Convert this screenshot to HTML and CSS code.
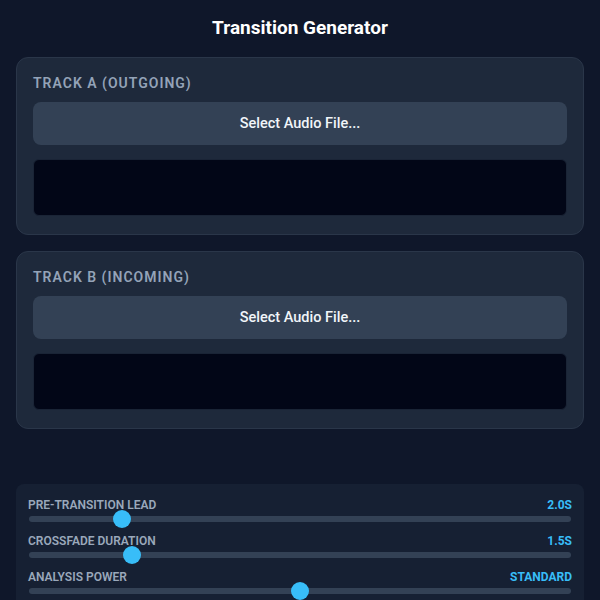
FILE: index.html
```html
<!DOCTYPE html>
<html>
<head>
<title>Transition Generator</title>
<link rel="stylesheet" href="styles.css">
</head>
<body>
<div class="app">
  <h1>Transition Generator</h1>

  <div class="track-card">
    <div class="track-label">Track A (Outgoing)</div>
    <button class="file-button">Select Audio File...</button>
    <div class="waveform" id="waveA"></div>
  </div>

  <div class="track-card">
    <div class="track-label">Track B (Incoming)</div>
    <button class="file-button">Select Audio File...</button>
    <div class="waveform" id="waveB"></div>
  </div>

  <div class="settings">
    <div class="setting">
      <div class="setting-head"><span>Pre-Transition Lead</span><span class="setting-value">2.0s</span></div>
      <input type="range" class="slider" min="0" max="100" value="16" />
    </div>
    <div class="setting">
      <div class="setting-head"><span>Crossfade Duration</span><span class="setting-value">1.5s</span></div>
      <input type="range" class="slider" min="0" max="100" value="18" />
    </div>
    <div class="setting">
      <div class="setting-head"><span>Analysis Power</span><span class="setting-value">Standard</span></div>
      <input type="range" class="slider" min="0" max="100" value="50" />
    </div>
  </div>
</div>
</body>
</html>
```

FILE: styles.css
```css
body {
  margin: 0;
  background-color: #0f172a;
  color: white;
  font-family: Roboto, "Liberation Sans", sans-serif;
}

.app {
  padding: 14px 16px 16px;
}

h1 {
  margin: 0 0 15px;
  font-size: 19px;
  line-height: 28px;
  font-weight: 700;
  text-align: center;
}

.track-card {
  background-color: #1e293b;
  border: 1px solid #2a3649;
  border-radius: 12px;
  padding: 16px 16px 18px;
  margin-bottom: 16px;
}

.track-label {
  font-size: 14px;
  line-height: 18px;
  font-weight: 600;
  letter-spacing: 1px;
  text-transform: uppercase;
  color: #94a3b8;
  margin-bottom: 10px;
}

.file-button {
  display: block;
  width: 100%;
  height: 43px;
  background-color: #334155;
  border: none;
  border-radius: 8px;
  color: #f1f5f9;
  font-family: inherit;
  font-size: 14.5px;
  font-weight: 500;
  cursor: pointer;
}

.waveform {
  margin-top: 14px;
  height: 55px;
  background-color: #020617;
  border: 1px solid #1a2436;
  border-radius: 6px;
}

.settings {
  margin-top: 55px;
  background-color: #162033;
  border-radius: 8px;
  padding: 14px 12px 12px;
  display: flex;
  flex-direction: column;
  gap: 6px;
}

.setting-head {
  display: flex;
  justify-content: space-between;
  font-size: 12px;
  line-height: 14px;
  font-weight: 600;
  text-transform: uppercase;
  color: #9aa8bb;
  margin-bottom: -2px;
}

.setting-value {
  color: #38bdf8;
  font-weight: 700;
}

.slider {
  -webkit-appearance: none;
  appearance: none;
  display: block;
  width: calc(100% - 2px);
  height: 18px;
  margin: 0 1px;
  background: transparent;
}

.slider::-webkit-slider-runnable-track {
  height: 6px;
  background-color: #334155;
  border-radius: 3px;
}

.slider::-webkit-slider-thumb {
  -webkit-appearance: none;
  width: 18px;
  height: 18px;
  margin-top: -6px;
  border-radius: 50%;
  background-color: #38bdf8;
  border: none;
}
```
